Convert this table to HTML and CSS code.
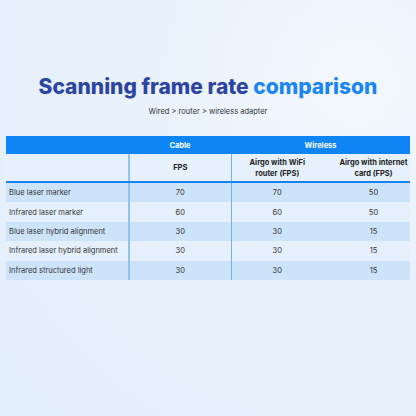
FILE: index.html
```html
<!DOCTYPE html>
<html>
<head>
    <link rel="stylesheet" href="styles.css">
</head>
<body>

<div class="page">
    <h1 class="title">Scanning frame rate <span class="accent">comparison</span></h1>
    <p class="subtitle">Wired &gt; router &gt; wireless adapter</p>

    <!-- Comparison table -->
    <table class="compare">
        <colgroup>
            <col class="c-name">
            <col class="c-cable">
            <col class="c-wifi">
            <col class="c-card">
        </colgroup>
        <thead>
            <tr class="group-row">
                <th></th>
                <th>Cable</th>
                <th colspan="2">Wireless</th>
            </tr>
            <tr class="sub-row">
                <th></th>
                <th class="line-a">FPS</th>
                <th class="line-b">Airgo with WiFi<br>router (FPS)</th>
                <th class="card">Airgo with internet<br>card (FPS)</th>
            </tr>
        </thead>
        <tbody>
            <tr>
                <td class="name">Blue laser marker</td>
                <td class="line-a">70</td>
                <td class="line-b">70</td>
                <td class="card">50</td>
            </tr>
            <tr>
                <td class="name">Infrared laser marker</td>
                <td class="line-a">60</td>
                <td class="line-b">60</td>
                <td class="card">50</td>
            </tr>
            <tr>
                <td class="name">Blue laser hybrid alignment</td>
                <td class="line-a">30</td>
                <td class="line-b">30</td>
                <td class="card">15</td>
            </tr>
            <tr>
                <td class="name">Infrared laser hybrid alignment</td>
                <td class="line-a">30</td>
                <td class="line-b">30</td>
                <td class="card">15</td>
            </tr>
            <tr>
                <td class="name">Infrared structured light</td>
                <td class="line-a">30</td>
                <td class="line-b">30</td>
                <td class="card">15</td>
            </tr>
        </tbody>
    </table>
</div>

</body>
</html>
```

FILE: styles.css
```css
/* General Styling */
body {
    margin: 0;
    padding: 0;
    font-family: "Inter", "Noto Sans", sans-serif;
    background: radial-gradient(circle at 85% 20%, #f4f8fe 0%, #e9f2fc 40%, #e3eefb 100%);
    width: 416px;
    height: 416px;
    overflow: hidden;
}

.page {
    padding: 74px 6px 0 6px;
}

.title {
    margin: 0;
    text-align: center;
    font-size: 21px;
    font-weight: 800;
    color: #2c45a3;
    line-height: 25px;
}

.title .accent {
    color: #1a86f3;
}

.subtitle {
    margin: 8px 0 0 0;
    text-align: center;
    font-size: 7.5px;
    color: #333;
    line-height: 10px;
}

/* Table */
.compare {
    margin-top: 19px;
    width: 404px;
    border-collapse: collapse;
    table-layout: fixed;
    font-size: 7.5px;
    color: #333;
}

.c-name { width: 123px; }
.c-cable { width: 102px; }
.c-wifi { width: 92px; }
.c-card { width: 87px; }

.compare th,
.compare td {
    padding: 0;
    text-align: center;
}

.group-row th {
    background-color: #0d85f5;
    color: #fff;
    font-weight: 700;
    height: 18px;
}

.sub-row th {
    background-color: #e6f1fd;
    color: #222;
    font-weight: 700;
    height: 27px;
    line-height: 11px;
    border-bottom: 2px solid #1786f1;
}

.compare tbody td {
    height: 19.4px;
}

.compare tbody tr:nth-child(odd) td {
    background-color: #cce3fa;
}

.compare tbody tr:nth-child(even) td {
    background-color: #e5f0fc;
}

.compare td.name {
    text-align: left;
    padding-left: 3px;
}

.line-a {
    border-left: 2px solid #8fc3f3;
}

.line-b {
    border-left: 1px solid #6eb1f1;
}

.card {
    padding-left: 14px !important;
}
```
